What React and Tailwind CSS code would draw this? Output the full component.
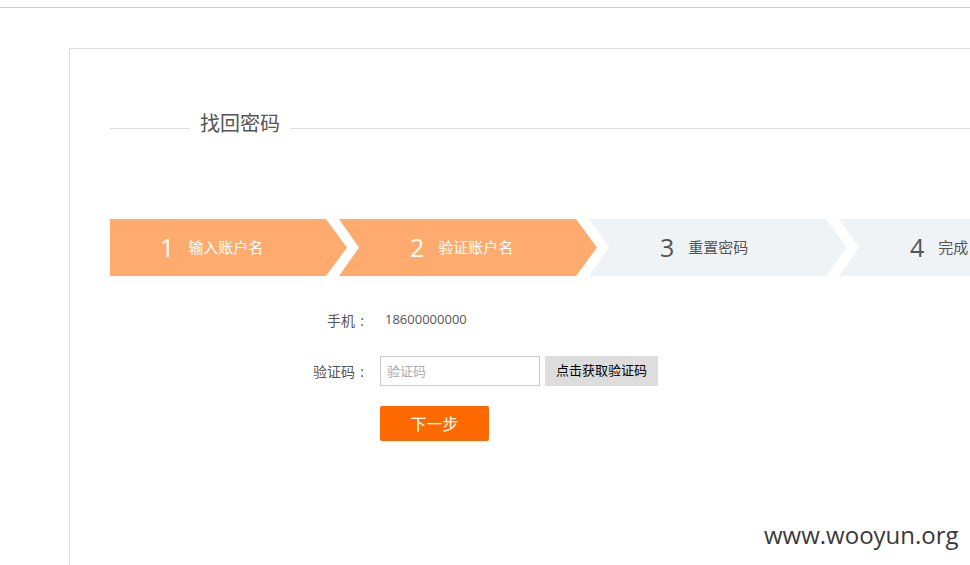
const CJK = { fontFamily: '"Open Sans", "Noto Sans CJK SC", sans-serif' };

const STEPS = [
  { n: "1", label: "输入账户名", done: true },
  { n: "2", label: "验证账户名", done: true },
  { n: "3", label: "重置密码", done: false },
  { n: "4", label: "完成", done: false },
];

const ARROW =
  "polygon(0 0, 237px 0, 258px 50%, 237px 100%, 0 100%, 20px 50%)";

function Step({ step, first }) {
  return (
    <div
      className={`flex h-[57px] w-[258px] shrink-0 items-center pl-[71px] ${
        first ? "" : "-ml-[8px]"
      } ${step.done ? "bg-[#ffaa6e] text-white" : "bg-[#eff3f6] text-[#555]"}`}
      style={{ clipPath: ARROW }}
    >
      <span className="text-[25px] leading-none">{step.n}</span>
      <span className="ml-[14px] text-[15px]">{step.label}</span>
    </div>
  );
}

function Label({ children }) {
  return (
    <span className="flex w-[259px] justify-end text-[14px] text-[#555]">
      {children}
      <span className="inline-block w-[14px] text-center">:</span>
    </span>
  );
}

export default function App() {
  return (
    <div
      className="relative h-[565px] w-[970px] overflow-hidden bg-white"
      style={CJK}
    >
      <div className="h-[8px] border-b border-[#cccccc]" />
      <div className="ml-[69px] mt-[40px] h-[600px] w-[1000px] border-l border-t border-[#dddddd] pl-[40px] pt-[61px]">
        <div className="flex items-center">
          <div className="h-px w-[80px] bg-[#dddddd]" />
          <h2 className="mb-[9px] px-[10px] text-[20px] leading-[28px] text-[#555]">
            找回密码
          </h2>
          <div className="h-px flex-1 bg-[#dddddd]" />
        </div>

        <div className="mt-[72px] overflow-hidden">
          <div className="-ml-[21px] flex">
            {STEPS.map((s, i) => (
              <Step key={s.n} step={s} first={i === 0} />
            ))}
          </div>
        </div>

        <div className="mt-[29px] flex h-[30px] items-center text-[13px] text-[#555]">
          <Label>手机</Label>
          <span className="ml-[16px]">18600000000</span>
        </div>

        <div className="mt-[21px] flex h-[30px] items-center text-[13px] text-[#555]">
          <Label>验证码</Label>
          <input
            className="ml-[11px] h-[30px] w-[160px] border border-[#cccccc] px-[6px] text-[13px] text-[#333] outline-none placeholder:text-[#aaa]"
            placeholder="验证码"
          />
          <button
            type="button"
            className="ml-[5px] h-[30px] w-[113px] bg-[#dddddd] text-[13px] text-black"
          >
            点击获取验证码
          </button>
        </div>

        <div className="mt-[20px] pl-[270px]">
          <button
            type="button"
            className="h-[35px] w-[109px] rounded-[2px] bg-[#ff6a00] text-[16px] text-white"
          >
            下一步
          </button>
        </div>
      </div>

      <span className="absolute left-[764px] top-[517px] text-[24px] text-[#3a3a3a]">
        www.wooyun.org
      </span>
    </div>
  );
}
